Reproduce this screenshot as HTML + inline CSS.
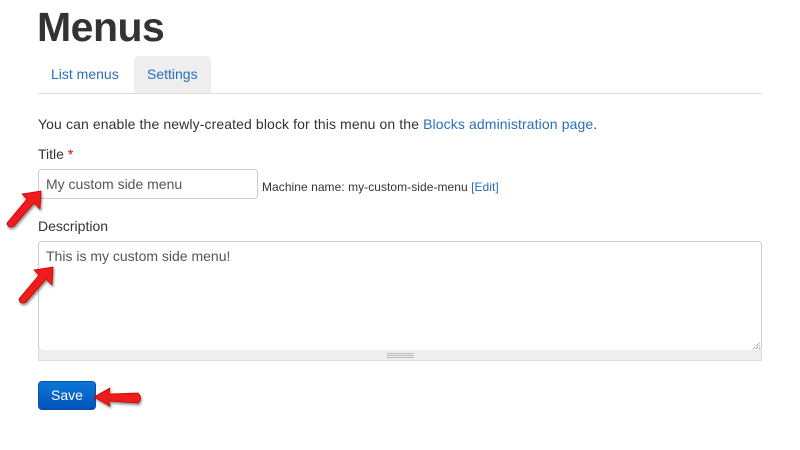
<!DOCTYPE html>
<html><head><meta charset="utf-8"><style>
*{margin:0;padding:0;box-sizing:border-box}
body{width:800px;height:450px;background:#fff;font-family:"Liberation Sans",Arial,sans-serif;color:#333;position:relative;overflow:hidden}
.a{position:absolute}
h1{position:absolute;left:37px;top:4px;font-size:41px;font-weight:bold;color:#333;letter-spacing:-0.5px}
.tab{position:absolute;top:56px;height:37px;line-height:37px;font-size:14px;color:#2a6ebb;padding:0 13px}
.line{position:absolute;left:38px;top:93px;width:724px;height:1px;background:#ddd}
a{color:#2a6ebb;text-decoration:none}
</style></head><body>
<h1>Menus</h1>
<div class="tab" style="left:38px">List menus</div>
<div class="tab" style="left:134px;width:77px;background:#eee;border-radius:4px 4px 0 0">Settings</div>
<div class="line"></div>
<div class="a" style="left:38px;top:116px;font-size:14px;color:#333;letter-spacing:0.11px">You can enable the newly-created block for this menu on the <a>Blocks administration page</a>.</div>
<div class="a" style="left:38px;top:146px;font-size:14px">Title <span style="color:#e00">*</span></div>
<div class="a" style="left:38px;top:169px;width:220px;height:30px;border:1px solid #ccc;border-radius:4px;font-size:14px;line-height:28px;padding-left:7px;color:#555">My custom side menu</div>
<div class="a" style="left:262px;top:180px;font-size:12px;color:#333;letter-spacing:0.05px">Machine name: my-custom-side-menu <a>[Edit]</a></div>
<div class="a" style="left:38px;top:218px;font-size:14px">Description</div>
<div class="a" style="left:38px;top:241px;width:724px;height:110px;border:1px solid #ccc;border-radius:4px;font-size:14px;padding:6px 7px;color:#555">This is my custom side menu!</div>
<svg class="a" style="left:752px;top:341px" width="9" height="9"><path d="M1 8L8 1M4 8L8 4M7 8L8 7" stroke="#777" stroke-width="1" stroke-dasharray="1 1"/></svg>
<div class="a" style="left:38px;top:350px;width:724px;height:11px;background:#eee;border:1px solid #ddd;border-top:none"></div>
<div class="a" style="left:387px;top:353px;width:27px;height:5px;border-top:1px solid #bbb;border-bottom:1px solid #bbb"></div>
<div class="a" style="left:387px;top:355px;width:27px;height:1px;background:#bbb"></div>
<div class="a" style="left:38px;top:381px;width:58px;height:29px;border-radius:4px;background:linear-gradient(#0a78d8,#0052b8);border:1px solid #0a4ea8;color:#fff;font-size:14px;text-align:center;line-height:27px">Save</div>
<svg class="a" style="left:0;top:0" width="800" height="450">
<defs><filter id="s"><feDropShadow dx="1" dy="2" stdDeviation="1.2" flood-color="#000" flood-opacity="0.45"/></filter></defs>
<g fill="#ee1a1a" stroke="#c00" stroke-width="0.8" filter="url(#s)" stroke-linejoin="round">
<path d="M41 191 L40 209 L34 203 L14 226 Q8 229 7 223 L27 199 L22 194 Z"/>
<path d="M53 267 L52 285 L46 279 L26 302 Q20 305 19 299 L39 275 L34 270 Z"/>
<path d="M94 397 L110 388 L109 394 L138 393 Q143 398 138 403 L109 401 L110 406 Z"/>
</g></svg>
</body></html>
